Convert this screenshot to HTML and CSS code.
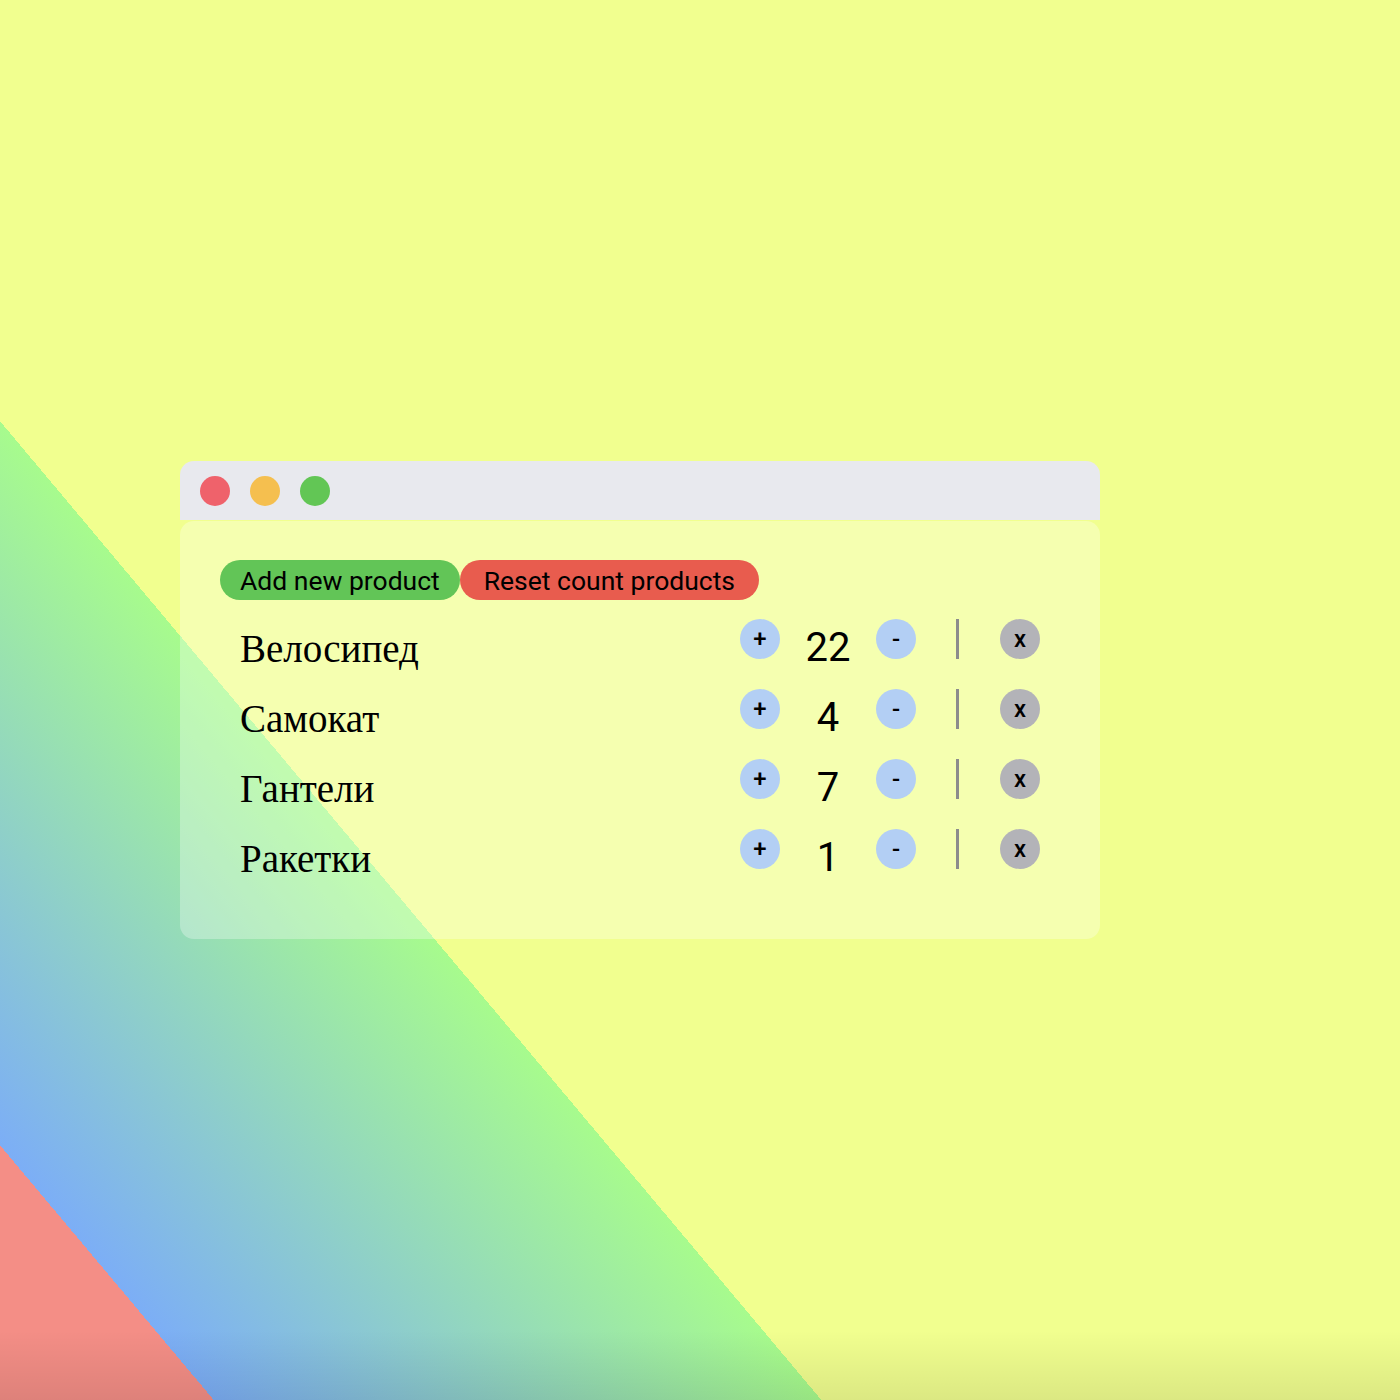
FILE: index.html
```html
<!DOCTYPE html>
<html lang="ru">
<head>
  <meta charset="UTF-8">
  <meta name="viewport" content="width=device-width, initial-scale=1.0">
  <title>Products</title>
  <link rel="stylesheet" href="styles.css">
</head>
<body>

  <div class="window">
    <div class="window-bar">
      <span class="dot dot-red"></span>
      <span class="dot dot-yellow"></span>
      <span class="dot dot-green"></span>
    </div>

    <div class="window-body">
      <div class="toolbar">
        <button class="pill pill-add">Add new product</button>
        <button class="pill pill-reset">Reset count products</button>
      </div>

      <ul class="product-list">
        <li class="product">
          <span class="product-name">Велосипед</span>
          <button class="round round-blue">+</button>
          <span class="product-count">22</span>
          <button class="round round-blue">-</button>
          <span class="divider"></span>
          <button class="round round-grey">x</button>
        </li>
        <li class="product">
          <span class="product-name">Самокат</span>
          <button class="round round-blue">+</button>
          <span class="product-count">4</span>
          <button class="round round-blue">-</button>
          <span class="divider"></span>
          <button class="round round-grey">x</button>
        </li>
        <li class="product">
          <span class="product-name">Гантели</span>
          <button class="round round-blue">+</button>
          <span class="product-count">7</span>
          <button class="round round-blue">-</button>
          <span class="divider"></span>
          <button class="round round-grey">x</button>
        </li>
        <li class="product">
          <span class="product-name">Ракетки</span>
          <button class="round round-blue">+</button>
          <span class="product-count">1</span>
          <button class="round round-blue">-</button>
          <span class="divider"></span>
          <button class="round round-grey">x</button>
        </li>
      </ul>
    </div>
  </div>

</body>
</html>
```

FILE: styles.css
```css
html, body {
  margin: 0;
  height: 100%;
}

body {
  min-height: 100vh;
  box-sizing: border-box;
  padding-left: 180px;
  display: flex;
  align-items: center;
  font-family: Roboto, Arial, sans-serif;
  background:
    linear-gradient(to bottom, rgba(0, 0, 0, 0) calc(100% - 70px), rgba(0, 0, 0, 0.09) 100%),
    linear-gradient(50deg,
      #f48e86 0%, #f48e86 8.3%,
      #7caef6 8.3%, #a7fb8d 31.9%,
      #f1ff8f 31.9%, #f1ff8f 100%);
}

.window {
  width: 920px;
}

.window-bar {
  height: 59px;
  background-color: #e8e9ee;
  border-radius: 14px 14px 0 0;
  padding-left: 20px;
  display: flex;
  align-items: center;
  gap: 20px;
  margin-bottom: 1px;
}

.dot {
  width: 30px;
  height: 30px;
  border-radius: 50%;
}
.dot-red { background-color: #ef626b; }
.dot-yellow { background-color: #f5bf4f; }
.dot-green { background-color: #62c655; }

.window-body {
  background-color: rgba(255, 255, 255, 0.3);
  border-radius: 14px;
  padding: 39px 40px 40px;
}

.toolbar {
  display: flex;
  margin-bottom: 19px;
}

.pill {
  height: 40px;
  border: none;
  border-radius: 20px;
  font-family: Roboto, Arial, sans-serif;
  font-size: 26.5px;
  color: #000;
  cursor: pointer;
}
.pill-add {
  background-color: #62c557;
  padding: 0 20px;
}
.pill-reset {
  background-color: #e85c4e;
  padding: 0 24px;
}

.product-list {
  list-style: none;
  margin: 0;
  padding: 0 20px;
}

.product {
  height: 70px;
  display: flex;
  align-items: flex-start;
}

.product-name {
  flex: 1;
  font-family: "Liberation Serif", "Times New Roman", serif;
  font-size: 39px;
  line-height: 59px;
}

.product-count {
  width: 96px;
  text-align: center;
  font-size: 40px;
  line-height: 58px;
}

.round {
  width: 40px;
  height: 40px;
  border: none;
  border-radius: 50%;
  padding: 0;
  font-family: Roboto, Arial, sans-serif;
  font-size: 24px;
  font-weight: 500;
  color: #000;
  cursor: pointer;
}
.round-blue { background-color: #b3cff4; }
.round-grey { background-color: #b3b3b8; }

.divider {
  width: 3px;
  height: 40px;
  background-color: #8c8c8c;
  margin: 0 41px 0 40px;
}
```
